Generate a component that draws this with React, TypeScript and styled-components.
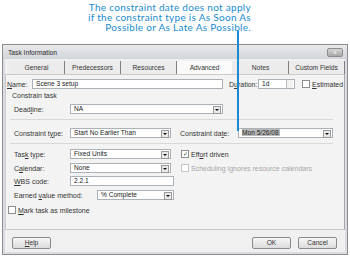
import React from "react";
import styled, { createGlobalStyle } from "styled-components";

const GlobalStyle = createGlobalStyle`
  html, body {
    margin: 0;
    padding: 0;
    background: #ffffff;
  }
  body {
    width: 350px;
    height: 259px;
    overflow: hidden;
    font-family: "Liberation Sans", Arial, sans-serif;
  }
`;

const Page = styled.div`
  position: relative;
  width: 350px;
  height: 259px;
`;

const Callout = styled.div`
  width: 251px;
  height: 32px;
  padding-top: 2px;
  box-sizing: border-box;
  text-align: right;
  font-family: Lato, "Open Sans", sans-serif;
  font-size: 10px;
  line-height: 10px;
  letter-spacing: 0.3px;
  color: #1a8bd0;
`;

const Leader = styled.div`
  position: absolute;
  left: 237px;
  top: 31px;
  width: 1.5px;
  height: 100px;
  background: #1a8bd0;
  z-index: 2;
`;

const Window = styled.div`
  margin: 12px 0 0 2px;
  width: 346px;
  height: 211px;
  box-sizing: border-box;
  border: 1px solid #8d8d8d;
  background: #d9dce0;
  display: flex;
  flex-direction: column;
`;

const TitleBar = styled.div`
  height: 14px;
  display: flex;
  align-items: center;
  justify-content: space-between;
  padding: 0 4px 0 5px;
  background: linear-gradient(#e8eaec, #d2d5d9);
  font-size: 6.7px;
  color: #2a2a2a;
`;

const CloseButton = styled.div`
  width: 14px;
  height: 7px;
  border: 1px solid #8e8e8e;
  border-radius: 2px;
  background: linear-gradient(#d6d6d6, #a8a8a8);
  color: #fff;
  font-size: 6px;
  line-height: 7px;
  text-align: center;
`;

const Client = styled.div`
  flex: 1;
  margin: 0 2px 2px;
  background: #f0f0f0;
  display: flex;
  flex-direction: column;
`;

const TabRow = styled.div`
  display: flex;
  height: 15px;
  padding-left: 4px;
`;

const Tab = styled.div<{ $active?: boolean }>`
  width: 56px;
  display: flex;
  align-items: center;
  justify-content: center;
  font-size: 6.7px;
  color: #333;
  background: ${(p) => (p.$active ? "#fafafa" : "#ececec")};
  border-right: 1px solid ${(p) => (p.$active ? "#ececec" : "#808080")};
  margin-top: 2px;
`;

const Panel = styled.div`
  height: 156px;
  box-sizing: border-box;
  border: 1px solid #cbcbcb;
  border-right-color: #a8a8a8;
  background: #f3f3f3;
  display: flex;
  flex-direction: column;
`;

const Row = styled.div<{ $top: number; $indent?: number }>`
  display: flex;
  align-items: center;
  height: 10px;
  margin-top: ${(p) => p.$top}px;
  padding-left: ${(p) => p.$indent ?? 8}px;
  font-size: 7px;
  color: #333;
  white-space: nowrap;
`;

const Label = styled.div<{ $w: number }>`
  width: ${(p) => p.$w}px;
  flex: none;
`;

const GroupTitle = styled.div`
  height: 8px;
  margin-top: 3px;
  padding-left: 6px;
  font-size: 7px;
  line-height: 8px;
  color: #333;
`;

const Separator = styled.div<{ $top: number; $bottom: number }>`
  height: 1px;
  margin: ${(p) => p.$top}px 11px ${(p) => p.$bottom}px 4px;
  background: #d8d8d8;
`;

const Field = styled.div<{ $w: number; $ml?: number }>`
  position: relative;
  width: ${(p) => p.$w}px;
  margin-left: ${(p) => p.$ml ?? 0}px;
  height: 10px;
  box-sizing: border-box;
  border: 1px solid #abb1b8;
  background: #fff;
  padding-left: 3px;
  font-size: 6.6px;
  line-height: 8px;
  color: #222;
  flex: none;
`;

const Selected = styled.span`
  background: #b9b9b9;
  padding: 0 1px 0 0;
`;

const DropButton = styled.div`
  position: absolute;
  right: 1px;
  top: 1px;
  width: 6px;
  height: 6px;
  border: 1px solid #9a9a9a;
  background: #e8e8e8;
  display: flex;
  align-items: center;
  justify-content: center;
  &::after {
    content: "";
    border-left: 2px solid transparent;
    border-right: 2px solid transparent;
    border-top: 2px solid #111;
  }
`;

const SpinButton = styled.div`
  position: absolute;
  right: 1px;
  top: 0;
  width: 6px;
  height: 8px;
  border-left: 1px solid #bbb;
  background: linear-gradient(#f2f2f2 0 45%, #bbb 45% 55%, #f2f2f2 55%);
`;

const Check = styled.div<{ $disabled?: boolean }>`
  width: 6px;
  height: 6px;
  flex: none;
  border: 1px solid ${(p) => (p.$disabled ? "#c6c6c6" : "#8e8e8e")};
  background: #fff;
  margin-right: 2px;
  font-size: 6px;
  line-height: 6px;
  text-align: center;
  color: #333;
`;

const CheckText = styled.span<{ $disabled?: boolean }>`
  color: ${(p) => (p.$disabled ? "#a7a7a7" : "#333")};
`;

const Key = styled.span`
  text-decoration: underline;
`;

const ButtonRow = styled.div`
  display: flex;
  align-items: center;
  padding: 7px 8px 0 7px;
`;

const Button = styled.div<{ $ml?: number }>`
  width: 39px;
  height: 12px;
  margin-left: ${(p) => p.$ml ?? 0}px;
  box-sizing: border-box;
  border: 1px solid #8a8a8a;
  border-radius: 2px;
  background: linear-gradient(#f6f6f6, #dcdcdc);
  font-size: 6.6px;
  line-height: 10px;
  text-align: center;
  color: #333;
`;

const Spacer = styled.div`
  flex: 1;
`;

const tabs = ["General", "Predecessors", "Resources", "Advanced", "Notes", "Custom Fields"];

export default function App() {
  return (
    <Page>
      <GlobalStyle />
      <Callout>
        The constraint date does not apply
        <br />
        if the constraint type is As Soon As
        <br />
        Possible or As Late As Possible.
      </Callout>
      <Leader />
      <Window>
        <TitleBar>
          <span>Task Information</span>
          <CloseButton>x</CloseButton>
        </TitleBar>
        <Client>
          <TabRow>
            {tabs.map((t) => (
              <Tab key={t} $active={t === "Advanced"}>
                {t}
              </Tab>
            ))}
          </TabRow>
          <Panel>
            <Row $top={4} $indent={1}>
              <Label $w={25}>
                <Key>N</Key>ame:
              </Label>
              <Field $w={191}>Scene 3 setup</Field>
              <Label $w={29} style={{ marginLeft: 6 }}>
                D<Key>u</Key>ration:
              </Label>
              <Field $w={37}>
                1d
                <SpinButton />
              </Field>
              <Check style={{ marginLeft: 7 }} />
              <CheckText>
                <Key>E</Key>stimated
              </CheckText>
            </Row>
            <GroupTitle>Constrain task</GroupTitle>
            <Row $top={4}>
              <Label $w={56}>
                Dead<Key>l</Key>ine:
              </Label>
              <Field $w={153}>
                NA
                <DropButton />
              </Field>
            </Row>
            <Separator $top={5} $bottom={8} />
            <Row $top={0}>
              <Label $w={56}>
                Constraint t<Key>y</Key>pe:
              </Label>
              <Field $w={101}>
                Start No Earlier Than
                <DropButton />
              </Field>
              <Label $w={58} style={{ marginLeft: 9 }}>
                Constraint da<Key>t</Key>e:
              </Label>
              <Field $w={95}>
                <Selected>Mon 5/26/08</Selected>
                <DropButton />
              </Field>
            </Row>
            <Separator $top={5} $bottom={5} />
            <Row $top={0}>
              <Label $w={56}>
                Tas<Key>k</Key> type:
              </Label>
              <Field $w={101}>
                Fixed Units
                <DropButton />
              </Field>
              <Check style={{ marginLeft: 10 }}>✓</Check>
              <CheckText>
                Eff<Key>o</Key>rt driven
              </CheckText>
            </Row>
            <Row $top={4}>
              <Label $w={56}>
                C<Key>a</Key>lendar:
              </Label>
              <Field $w={101}>
                None
                <DropButton />
              </Field>
              <Check $disabled style={{ marginLeft: 10 }} />
              <CheckText $disabled>Scheduling ignores resource calendars</CheckText>
            </Row>
            <Row $top={3}>
              <Label $w={56}>
                <Key>W</Key>BS code:
              </Label>
              <Field $w={104}>2.2.1</Field>
            </Row>
            <Row $top={4}>
              <Label $w={83}>
                Earned <Key>v</Key>alue method:
              </Label>
              <Field $w={77}>
                % Complete
                <DropButton />
              </Field>
            </Row>
            <Row $top={5} $indent={2}>
              <Check />
              <CheckText>
                <Key>M</Key>ark task as milestone
              </CheckText>
            </Row>
          </Panel>
          <ButtonRow>
            <Button>
              <Key>H</Key>elp
            </Button>
            <Spacer />
            <Button>OK</Button>
            <Button $ml={7}>Cancel</Button>
          </ButtonRow>
        </Client>
      </Window>
    </Page>
  );
}
